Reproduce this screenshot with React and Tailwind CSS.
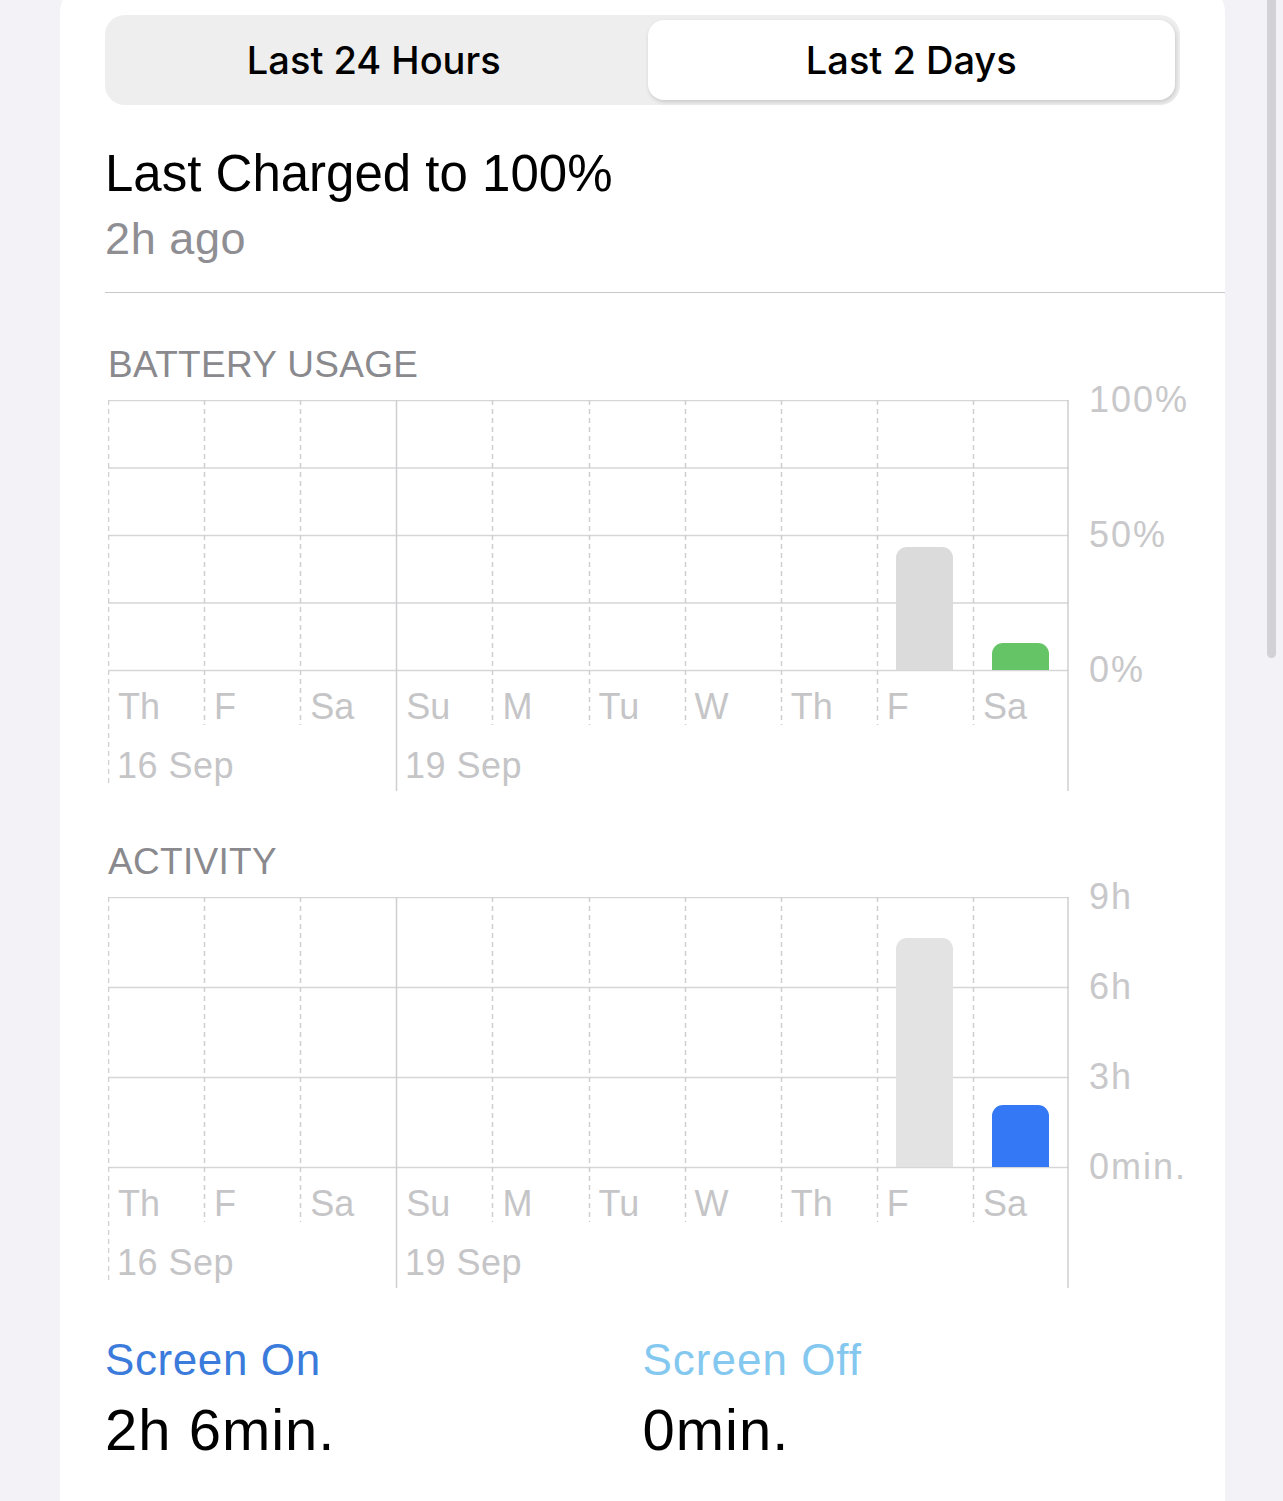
import React from "react";

const DAYS = ["Th", "F", "Sa", "Su", "M", "Tu", "W", "Th", "F", "Sa"];
const COL = 96.1;

function barPath(x, top, w, bottom, r) {
  return `M${x},${bottom} V${top + r} A${r},${r} 0 0 1 ${x + r},${top} H${x + w - r} A${r},${r} 0 0 1 ${x + w},${top + r} V${bottom} Z`;
}

function Chart({ title, divisions, axis, bars }) {
  const hLines = [];
  for (let k = 0; k <= divisions; k++) hLines.push((270 / divisions) * k);
  return (
    <div>
      <div className="ml-[3px] text-[37px] leading-[44px] tracking-[0.3px] text-[#8a8a8e]">{title}</div>
      <div className="ml-[3px] mt-[13px] flex">
        <div className="relative h-[391px] w-[961px] shrink-0">
          <svg className="absolute inset-0" width="961" height="391" viewBox="0 0 961 391">
            {hLines.map((y, i) => (
              <line key={"h" + i} x1="0" x2="961" y1={y + 0.5} y2={y + 0.5} stroke="#d6d6d8" strokeWidth="1.5" />
            ))}
            {Array.from({ length: 11 }).map((_, i) => {
              const x = i === 10 ? 960 : Math.round(i * COL) + 0.5;
              if (i === 3 || i === 10) {
                return <line key={"v" + i} x1={x} x2={x} y1="0" y2="391" stroke="#cfcfd1" strokeWidth="1.5" />;
              }
              return (
                <line
                  key={"v" + i}
                  x1={x}
                  x2={x}
                  y1="0"
                  y2={i === 0 ? 385 : 325}
                  stroke="#cfcfd1"
                  strokeWidth="1.5"
                  strokeDasharray="5 4"
                />
              );
            })}
            {bars.map((b, i) => (
              <path key={"b" + i} d={barPath(b.x, b.top, 57, 270, 11)} fill={b.color} />
            ))}
          </svg>
          <div className="relative h-[270px]" />
          <div className="relative mt-[12px] grid h-[50px] grid-cols-10 text-[36px] leading-[50px] text-[#c5c5c7]">
            {DAYS.map((d, i) => (
              <div key={i} className="pl-[10px]">
                {d}
              </div>
            ))}
          </div>
          <div className="relative mt-[9px] flex h-[50px] text-[36px] leading-[50px] tracking-[0.5px] text-[#c5c5c7]">
            <div className="w-[288px] shrink-0 pl-[9px]">16 Sep</div>
            <div className="pl-[9px]">19 Sep</div>
          </div>
        </div>
        <div className="ml-[20px] mt-[-20px] flex h-[310px] shrink-0 flex-col justify-between whitespace-nowrap text-[36px] leading-[40px] tracking-[2px] text-[#c8c8ca]">
          {axis.map((a) => (
            <div key={a}>{a}</div>
          ))}
        </div>
      </div>
    </div>
  );
}

export default function App() {
  return (
    <div className="relative h-[1501px] w-full overflow-hidden bg-[#f2f2f7] font-['Liberation_Sans',Arial,sans-serif]">
      <div className="ml-[60px] mt-[-14px] w-[1165px] rounded-[26px] bg-white px-[45px] pb-[80px] pt-[29px]">
        <div className="grid h-[90px] grid-cols-2 gap-[10px] rounded-[20px] bg-[#eeeeef] p-[5px] font-['Inter',sans-serif] text-[38px] font-medium text-black">
          <div className="flex items-center justify-center">Last 24 Hours</div>
          <div className="flex items-center justify-center rounded-[16px] bg-white shadow-[1px_2px_4px_rgba(0,0,0,0.16)]">
            Last 2 Days
          </div>
        </div>

        <div className="mt-[39px] text-[51px] leading-[60px] text-black">Last Charged to 100%</div>
        <div className="mt-[10px] text-[45px] leading-[50px] tracking-[0.6px] text-[#8e8e93]">2h ago</div>
        <div className="mr-[-45px] mt-[28px] h-px bg-[#c8c8cc]" />

        <div className="mt-[50px]">
          <Chart
            title="BATTERY USAGE"
            divisions={4}
            axis={["100%", "50%", "0%"]}
            bars={[
              { x: 788, top: 147, color: "#dbdbdb" },
              { x: 884, top: 243, color: "#65c466" },
            ]}
          />
        </div>

        <div className="mt-[49px]">
          <Chart
            title="ACTIVITY"
            divisions={3}
            axis={["9h", "6h", "3h", "0min."]}
            bars={[
              { x: 788, top: 41, color: "#e3e3e3" },
              { x: 884, top: 208, color: "#3478f6" },
            ]}
          />
        </div>

        <div className="mt-[47px] grid grid-cols-2">
          <div>
            <div className="text-[44px] leading-[50px] tracking-[0.6px] text-[#3a7bdc]">Screen On</div>
            <div className="mt-[13px] text-[58px] leading-[64px] tracking-[1px] text-black">2h 6min.</div>
          </div>
          <div>
            <div className="text-[44px] leading-[50px] tracking-[1px] text-[#84c8f0]">Screen Off</div>
            <div className="mt-[13px] text-[58px] leading-[64px] tracking-[1px] text-black">0min.</div>
          </div>
        </div>
      </div>
      <div className="absolute left-[1267px] top-[-10px] h-[668px] w-[9px] rounded-full bg-[#d1d1d6]" />
    </div>
  );
}
